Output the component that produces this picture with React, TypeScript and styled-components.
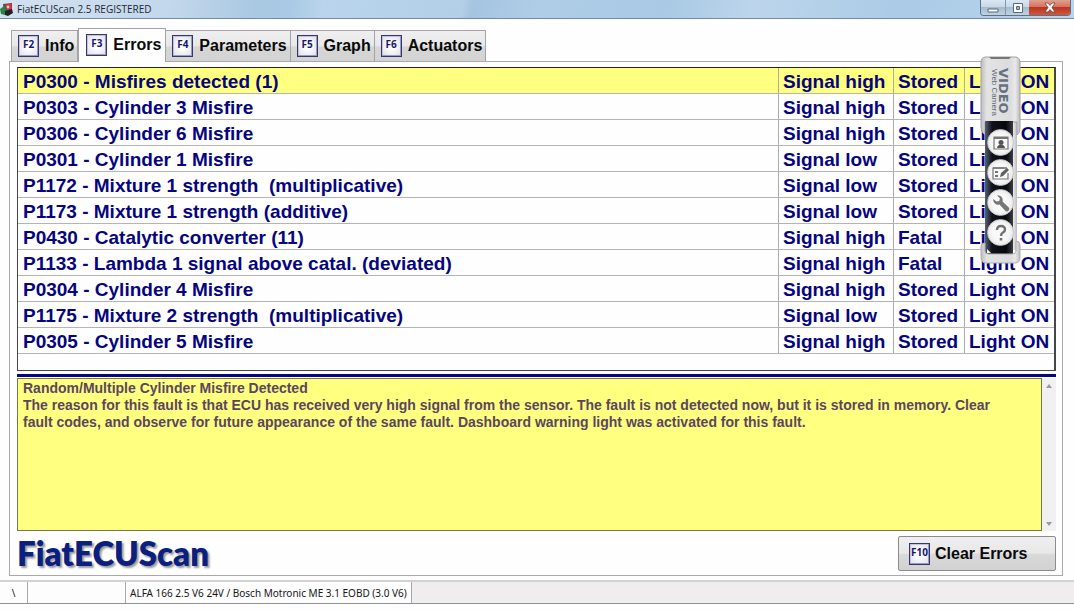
import React, { useState } from "react";
import styled, { createGlobalStyle } from "styled-components";

const GlobalStyle = createGlobalStyle`
  * { box-sizing: border-box; }
  body { margin: 0; background: #fefefe; font-family: "Liberation Sans", Arial, sans-serif; }
  button { font: inherit; color: inherit; padding: 0; margin: 0; }
`;

const Window = styled.div`
  position: relative;
  display: flex;
  flex-direction: column;
`;

const TitleBar = styled.header`
  display: flex;
  align-items: center;
  justify-content: space-between;
  height: 19px;
  padding-right: 3px;
  border-bottom: 1px solid #6f8ba6;
  background: linear-gradient(100deg, #d3e1f0 0%, #c3d7eb 16%, #a9c8e2 24%, #a9c9e4 27%, #b9d4ec 30%, #b3cfe8 43%, #a5c4df 44%, #afcde7 50%, #a9c9e4 62%, #bcd5ec 70%, #abcbe6 84%, #b9d5ee 100%);
`;

const Title = styled.h1`
  display: flex;
  align-items: center;
  gap: 3px;
  margin: 0;
  font: 400 10px/18px "Open Sans", "Noto Sans", sans-serif;
  color: #1c2733;
`;

const WindowButtons = styled.div`
  display: flex;
  align-self: flex-start;
  height: 16px;
  border: 1px solid #5c7187;
  border-top: 0;
  border-radius: 0 0 4px 4px;
  overflow: hidden;
`;

const WindowButton = styled.button<{ $close?: boolean }>`
  display: flex;
  align-items: center;
  justify-content: center;
  width: ${(p) => (p.$close ? 41 : 24)}px;
  border: 0;
  border-left: ${(p) => (p.$close ? "0" : "1px solid #8298ae")};
  background: ${(p) =>
    p.$close
      ? "linear-gradient(#e0a090 0%, #d27460 45%, #bd3420 50%, #d0583c 100%)"
      : "linear-gradient(#dbe7f2 0%, #c8d8e8 45%, #a5bbd0 50%, #bdd2e6 100%)"};
  &:first-child { border-left: 0; }
`;

const Main = styled.main`
  padding: 9px 11px 4px 9px;
`;

const TabList = styled.div`
  display: flex;
  align-items: flex-end;
  padding-left: 2px;
`;

const Tab = styled.button<{ $active: boolean }>`
  display: flex;
  align-items: center;
  gap: 6px;
  height: ${(p) => (p.$active ? 34 : 31)}px;
  padding: ${(p) => (p.$active ? "0 4px 2px 7px" : "0 3px 0 6px")};
  margin-bottom: ${(p) => (p.$active ? -1 : 0)}px;
  position: relative;
  border: 1px solid #a3a3a8;
  border-width: 1px 1px 0 ${(p) => (p.$active ? 1 : 0)}px;
  background: ${(p) => (p.$active ? "#fefefe" : "linear-gradient(#efefef 0%, #e8e8e8 48%, #d6d6d7 54%, #d3d3d4 100%)")};
  font-size: 16px;
  font-weight: 700;
  color: #0a0a0a;
  white-space: nowrap;
  &:first-child { border-left-width: 1px; }
`;

const Key = styled.kbd`
  display: flex;
  justify-content: center;
  flex: none;
  width: 21px;
  height: 22px;
  border: 1px solid #35356f;
  box-shadow: inset -1px -1px 0 #9c9cba, inset 1px 1px 0 #c4c4d6;
  background: radial-gradient(#ffffff 20%, #dcdce6 100%);
  font: 700 10px/17px "Open Sans", "Noto Sans", sans-serif;
  color: #16166e;
`;

const Panel = styled.section`
  padding: 5px 6px 3px 7px;
  border: 1px solid #a9a9ad;
`;

const TableFrame = styled.div`
  padding-bottom: 16px;
  border: 1px solid #45454a;
  border-right-width: 2px;
  border-top-color: #222;
`;

const ErrorTable = styled.table`
  width: 100%;
  table-layout: fixed;
  border-collapse: separate;
  border-spacing: 0;
  font-size: 19px;
  font-weight: 700;
  line-height: 23px;
  color: #05057e;
`;

const ErrorRow = styled.tr<{ $selected: boolean }>`
  background: ${(p) => (p.$selected ? "#ffff80" : "#fefefe")};
`;

const Cell = styled.td`
  padding: 2px 0 0 4px;
  border-right: 1px solid #ababb4;
  border-bottom: 1px solid #b4b4b8;
  white-space: pre;
  &:first-child { padding-left: 5px; }
  &:last-child { border-right: 0; }
`;

const Splitter = styled.hr`
  height: 3px;
  margin: 3px 0 1px;
  border: 0;
  background: #05057e;
`;

const Details = styled.div`
  display: flex;
`;

const DetailsText = styled.div`
  flex: 1;
  height: 153px;
  padding: 1px 24px 0 5px;
  border: 1px solid #77774f;
  background: #ffff80;
  font-size: 14px;
  font-weight: 700;
  line-height: 17px;
  color: #5b4660;
  p { margin: 0; }
`;

const ScrollBar = styled.div`
  display: flex;
  flex-direction: column;
  justify-content: space-between;
  width: 14px;
  background: #f1f1f1;
`;

const ScrollButton = styled.button`
  display: flex;
  align-items: center;
  justify-content: center;
  height: 15px;
  border: 0;
  background: transparent;
`;

const PanelFooter = styled.footer`
  display: flex;
  align-items: center;
  justify-content: space-between;
  height: 41px;
`;

const Logo = styled.div`
  padding-top: 2px;
  font: 800 33px/40px Lato, "Open Sans", sans-serif;
  color: #0b1f80;
  text-shadow: 2px 2px 2px #9a9a9a;
`;

const ClearButton = styled.button`
  display: flex;
  align-items: center;
  gap: 5px;
  width: 158px;
  height: 35px;
  padding-left: 10px;
  margin-top: 4px;
  border: 1px solid #8b8b8f;
  border-radius: 2px;
  background: linear-gradient(#efefef 0%, #e8e8e8 48%, #d8d8d8 54%, #d2d2d2 100%);
  font-size: 16px;
  font-weight: 700;
  color: #0a0a0a;
`;

const StatusBar = styled.footer`
  display: flex;
  height: 24px;
  border-top: 2px solid #d2d2d2;
  border-bottom: 1px solid #8f8f96;
  background: #efeded;
  font: 400 10px/22px "Noto Sans", "Open Sans", sans-serif;
  color: #161616;
`;

const StatusCell = styled.div<{ $width?: number }>`
  width: ${(p) => (p.$width ? `${p.$width}px` : "auto")};
  padding: 0 4px;
  border-right: 1px solid #a9a9a9;
  background: #fdfdfd;
  text-align: ${(p) => (p.$width === 28 ? "center" : "left")};
  white-space: nowrap;
`;

const Widget = styled.aside`
  position: absolute;
  top: 56px;
  right: 53px;
  width: 41px;
  height: 208px;
`;

const WidgetShell = styled.svg`
  display: block;
`;

const WidgetButtons = styled.div`
  position: absolute;
  top: 73px;
  left: 7px;
  display: flex;
  flex-direction: column;
  gap: 3px;
`;

const RoundButton = styled.button`
  display: flex;
  align-items: center;
  justify-content: center;
  width: 27px;
  height: 27px;
  border: 1px solid #c4c4c4;
  border-radius: 50%;
  background: radial-gradient(#f8f8f8 45%, #dcdcdc 100%);
`;

const tabs = [
  ["F2", "Info"],
  ["F3", "Errors"],
  ["F4", "Parameters"],
  ["F5", "Graph"],
  ["F6", "Actuators"],
];

const errors = [
  ["P0300 - Misfires detected (1)", "Signal high", "Stored"],
  ["P0303 - Cylinder 3 Misfire", "Signal high", "Stored"],
  ["P0306 - Cylinder 6 Misfire", "Signal high", "Stored"],
  ["P0301 - Cylinder 1 Misfire", "Signal low", "Stored"],
  ["P1172 - Mixture 1 strength  (multiplicative)", "Signal low", "Stored"],
  ["P1173 - Mixture 1 strength (additive)", "Signal low", "Stored"],
  ["P0430 - Catalytic converter (11)", "Signal high", "Fatal"],
  ["P1133 - Lambda 1 signal above catal. (deviated)", "Signal high", "Fatal"],
  ["P0304 - Cylinder 4 Misfire", "Signal high", "Stored"],
  ["P1175 - Mixture 2 strength  (multiplicative)", "Signal low", "Stored"],
  ["P0305 - Cylinder 5 Misfire", "Signal high", "Stored"],
];

function AppIcon() {
  return (
    <svg width="14" height="13" viewBox="0 0 14 13" aria-hidden="true">
      <path d="M3 1l9-1v8l-8 2z" fill="#49505a" />
      <path d="M5 2l6-2 1 6-5 2z" fill="#d33240" />
      <path d="M0 6l4-3 3 5-2 4-4-1z" fill="#27834a" />
      <path d="M5 8l7-2 1 4-5 3-3-1z" fill="#1f2228" />
      <circle cx="8" cy="4" r="1.400" fill="#f3c9b8" />
    </svg>
  );
}

function CameraWidget() {
  return (
    <Widget aria-label="Web camera">
      <WidgetShell width="41" height="208" viewBox="0 0 41 208">
        <defs>
          <linearGradient id="silver">
            <stop offset="0" stopColor="#bdbdbf" />
            <stop offset=".15" stopColor="#e3e3e4" />
            <stop offset=".75" stopColor="#dcdcde" />
            <stop offset=".88" stopColor="#e9e9ea" />
            <stop offset="1" stopColor="#bcbcbf" />
          </linearGradient>
          <linearGradient id="black">
            <stop offset="0" stopColor="#5a6070" />
            <stop offset=".25" stopColor="#10131c" />
            <stop offset=".75" stopColor="#07080c" />
            <stop offset="1" stopColor="#3b3d45" />
          </linearGradient>
        </defs>
        <path d="M5 64h32v130H5z" fill="url(#silver)" />
        <path d="M6 1h29q5 0 5 6v65q0 5-3 7V66H5v13q-4-3-4-8V7q0-6 5-6z" fill="url(#silver)" stroke="#a2a2a5" />
        <path d="M9 1h22l-2 2H11z" fill="#77777a" />
        <path d="M5 65h28v133H5z" fill="url(#black)" />
        <path d="M1 190q0-3 4-3v8q0 3 3 3h24q4 0 4-3v-10q4 0 4 4v12q0 6-5 6H6q-5 0-5-6z" fill="url(#silver)" stroke="#b0b0b3" />
        <path d="M7 193l4 4H7z" fill="#f4f4f4" />
        <text transform="translate(19 12) rotate(90)" fontFamily="DejaVu Sans, sans-serif" fontWeight="700" fontSize="13" fill="#66727e">VIDEO</text>
        <text transform="translate(12 13) rotate(90)" fontFamily="Liberation Sans, sans-serif" fontSize="8" fill="#5f6872">Web Camera</text>
      </WidgetShell>
      <WidgetButtons>
        <RoundButton aria-label="Snapshot">
          <svg width="16" height="14" viewBox="0 0 16 14">
            <path d="M1 1h14v12H1z" fill="none" stroke="#777" strokeWidth="1.2" />
            <path d="M1 2h14" stroke="#777" strokeWidth="2" />
            <circle cx="8" cy="6.5" r="2.5" fill="#555" />
            <path d="M4 12q0-2 2-3h4q2 1 2 3z" fill="#555" />
          </svg>
        </RoundButton>
        <RoundButton aria-label="Edit">
          <svg width="18" height="14" viewBox="0 0 18 14">
            <path d="M16 7v6H1V2h11" fill="none" stroke="#777" strokeWidth="1.2" />
            <path d="M1 2h14" stroke="#777" strokeWidth="1.6" />
            <path d="M3 5h3v2H3zM3 9h3v2H3z" fill="#777" />
            <path d="M8 11l1-4 6-5 2 2-6 6z" fill="#606060" />
          </svg>
        </RoundButton>
        <RoundButton aria-label="Settings">
          <svg width="18" height="18" viewBox="0 0 18 18">
            <path d="M1.200 5A5 5 0 0 0 7.500 10.500L13 16.500a2.300 2.300 0 0 0 3.500-3.200L10.500 7.500A5 5 0 0 0 5 1.200L8 4.400 7.200 7 4.500 7.600z" fill="#777" />
          </svg>
        </RoundButton>
        <RoundButton aria-label="Help">
          <svg width="14" height="18" viewBox="0 0 14 18">
            <path d="M3 6q0-4 4-4t4 3.500q0 2-2 3t-2 3.500" fill="none" stroke="#707070" strokeWidth="2.4" />
            <path d="M5.700 14h2.600v2.500H5.700z" fill="#707070" />
          </svg>
        </RoundButton>
      </WidgetButtons>
    </Widget>
  );
}

export default function App() {
  const [activeTab, setActiveTab] = useState("Errors");
  const [selected, setSelected] = useState(0);

  return (
    <Window>
      <GlobalStyle />
      <TitleBar>
        <Title>
          <AppIcon />
          FiatECUScan 2.5 REGISTERED
        </Title>
        <WindowButtons>
          <WindowButton aria-label="Minimize">
            <svg width="12" height="10" viewBox="0 0 12 10">
              <path d="M1 6h10v3H1z" fill="#fff" stroke="#58697a" />
            </svg>
          </WindowButton>
          <WindowButton aria-label="Restore">
            <svg width="12" height="12" viewBox="0 0 12 12">
              <path d="M1.500 1.500h9v9h-9z" fill="#fff" stroke="#58697a" />
              <path d="M4.500 4.500h3v3h-3z" fill="#9db2c6" stroke="#58697a" />
            </svg>
          </WindowButton>
          <WindowButton $close aria-label="Close">
            <svg width="12" height="11" viewBox="0 0 12 11">
              <path d="M1 1h3l2 2.500L8 1h3L8 5.500l3 4.500H8L6 7.500 4 10H1l3-4.500z" fill="#fff" stroke="#6c4540" strokeWidth=".8" />
            </svg>
          </WindowButton>
        </WindowButtons>
      </TitleBar>

      <Main>
        <TabList role="tablist">
          {tabs.map(([key, label]) => (
            <Tab key={key} role="tab" aria-selected={activeTab === label} $active={activeTab === label} onClick={() => setActiveTab(label)}>
              <Key>{key}</Key>
              {label}
            </Tab>
          ))}
        </TabList>

        <Panel>
          <TableFrame>
            <ErrorTable>
              <colgroup>
                <col />
                <col width="115" />
                <col width="71" />
                <col width="89" />
              </colgroup>
              <tbody>
                {errors.map(([code, signal, state], index) => (
                  <ErrorRow key={code} $selected={index === selected} onClick={() => setSelected(index)}>
                    <Cell>{code}</Cell>
                    <Cell>{signal}</Cell>
                    <Cell>{state}</Cell>
                    <Cell>Light ON</Cell>
                  </ErrorRow>
                ))}
              </tbody>
            </ErrorTable>
          </TableFrame>
          <Splitter />
          <Details>
            <DetailsText>
              <p>Random/Multiple Cylinder Misfire Detected</p>
              <p>
                The reason for this fault is that ECU has received very high signal from the sensor. The fault is not detected now, but it is stored in memory. Clear fault codes, and observe for future appearance of the same fault. Dashboard warning light was activated for this fault.
              </p>
            </DetailsText>
            <ScrollBar>
              <ScrollButton aria-label="Scroll up">
                <svg width="6" height="4" viewBox="0 0 6 4">
                  <path d="M0 4l3-4 3 4z" fill="#9a9a9a" />
                </svg>
              </ScrollButton>
              <ScrollButton aria-label="Scroll down">
                <svg width="6" height="4" viewBox="0 0 6 4">
                  <path d="M0 0l3 4 3-4z" fill="#9a9a9a" />
                </svg>
              </ScrollButton>
            </ScrollBar>
          </Details>
          <PanelFooter>
            <Logo>FiatECUScan</Logo>
            <ClearButton>
              <Key>F10</Key>
              Clear Errors
            </ClearButton>
          </PanelFooter>
        </Panel>
      </Main>

      <StatusBar>
        <StatusCell $width={28}>\</StatusCell>
        <StatusCell $width={98} />
        <StatusCell>ALFA 166 2.5 V6 24V / Bosch Motronic ME 3.1 EOBD (3.0 V6)</StatusCell>
      </StatusBar>
      <CameraWidget />
    </Window>
  );
}
